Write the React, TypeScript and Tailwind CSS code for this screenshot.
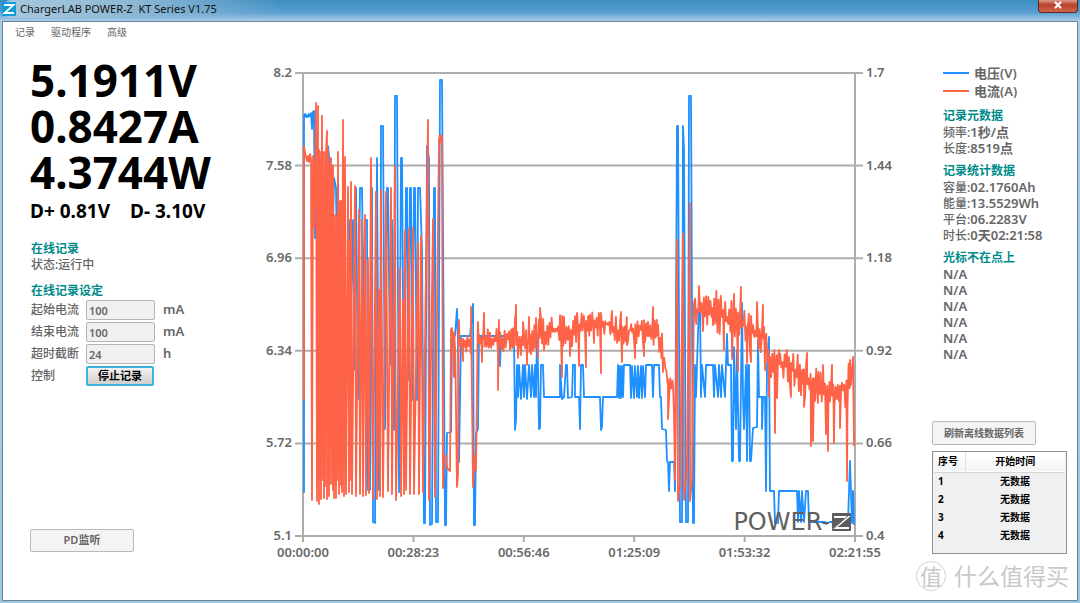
import { X } from 'lucide-react';

type Point = [number, number];
type Band = [x: number, top: number, bottom: number];

const MENU = ['记录', '驱动程序', '高级'];

const SETTINGS = [
  { id: 'start', label: '起始电流', value: '100', unit: 'mA' },
  { id: 'end', label: '结束电流', value: '100', unit: 'mA' },
  { id: 'timeout', label: '超时截断', value: '24', unit: 'h' },
];

const LEGEND = [
  { label: '电压(V)', color: 'bg-[#1e90ff]' },
  { label: '电流(A)', color: 'bg-[#ff6347]' },
];

const META = [
  { label: '频率:', value: '1秒/点' },
  { label: '长度:', value: '8519点' },
];

const STATS = [
  { label: '容量:', value: '02.1760Ah' },
  { label: '能量:', value: '13.5529Wh' },
  { label: '平台:', value: '06.2283V' },
  { label: '时长:', value: '0天02:21:58' },
];

// Plot area inside the chart's own coordinate space
const PLOT = { left: 303, right: 855, top: 73, bottom: 536 };
const VOLT_TICKS = ['8.2', '7.58', '6.96', '6.34', '5.72', '5.1'];
const AMP_TICKS = ['1.7', '1.44', '1.18', '0.92', '0.66', '0.4'];
const TIME_TICKS = ['00:00:00', '00:28:23', '00:56:46', '01:25:09', '01:53:32', '02:21:55'];

const VOLTAGE: Point[] = [
  [304, 493], [304, 115], [305, 114], [306, 117], [307, 115], [308, 117], [309, 114], [310, 116],
  [311, 113], [312, 129], [313, 112], [314, 111], [315, 238], [316, 238], [317, 140], [319, 300],
  [321, 175], [323, 330], [325, 200], [326, 350], [328, 146], [329, 155], [331, 320], [334, 178],
  [336, 188], [338, 330], [340, 250], [342, 280], [344, 220], [346, 420], [349, 220], [350, 340],
  [353, 220], [354, 370], [356, 188], [358, 399], [360, 188], [361, 188], [362, 188], [364, 340],
  [365, 220], [367, 220], [368, 490], [370, 490], [372, 188], [373, 522], [375, 523], [377, 158],
  [379, 490], [380, 490], [381, 126], [383, 126], [385, 429], [387, 188], [388, 188], [390, 365],
  [391, 220], [392, 220], [394, 430], [395, 96], [397, 96], [399, 492], [401, 158], [402, 158],
  [404, 430], [406, 188], [407, 188], [408, 380], [410, 188], [411, 188], [412, 400], [414, 188],
  [415, 188], [417, 400], [418, 188], [420, 188], [422, 250], [424, 523], [425, 523], [427, 146],
  [429, 158], [430, 525], [432, 524], [434, 188], [435, 188], [436, 522], [438, 522], [440, 80],
  [442, 80], [445, 525], [446, 525], [447, 433], [451, 432], [452, 336], [455, 336], [457, 309],
  [458, 340], [459, 462], [461, 336], [470, 336], [473, 304], [474, 525], [475, 525], [476, 433],
  [478, 429], [479, 336], [499, 336], [500, 366], [501, 336], [514, 336], [515, 430], [516, 420],
  [517, 365], [518, 397], [519, 365], [521, 399], [523, 365], [524, 397], [525, 365], [527, 399],
  [529, 365], [531, 397], [532, 365], [534, 397], [535, 365], [536, 397], [537, 336], [538, 366],
  [539, 429], [540, 428], [541, 365], [543, 365], [544, 397], [560, 397], [560, 365], [562, 399],
  [564, 397], [566, 365], [567, 365], [568, 398], [572, 397], [573, 365], [575, 365], [575, 397],
  [579, 397], [580, 429], [581, 365], [583, 365], [584, 397], [600, 397], [601, 430], [602, 427],
  [603, 397], [617, 397], [618, 365], [619, 398], [620, 366], [621, 398], [622, 366], [623, 397],
  [624, 365], [630, 365], [631, 398], [632, 366], [634, 398], [635, 366], [637, 397], [638, 366],
  [639, 398], [641, 366], [642, 398], [643, 366], [645, 397], [646, 365], [652, 365], [653, 397],
  [654, 365], [659, 365], [660, 397], [661, 397], [662, 429], [666, 430], [667, 461], [668, 462],
  [669, 491], [670, 462], [674, 462], [675, 491], [677, 126], [678, 126], [680, 522], [682, 522],
  [683, 126], [684, 150], [686, 522], [688, 522], [689, 96], [691, 96], [693, 523], [694, 523],
  [695, 365], [696, 397], [697, 365], [699, 303], [700, 303], [701, 397], [702, 365], [705, 397],
  [706, 365], [713, 365], [714, 397], [715, 365], [718, 397], [719, 365], [721, 397], [722, 365],
  [725, 397], [727, 334], [728, 365], [731, 365], [732, 461], [733, 461], [734, 347], [736, 429],
  [737, 350], [739, 461], [740, 461], [742, 303], [743, 397], [744, 429], [746, 365], [747, 461],
  [748, 365], [749, 365], [750, 461], [751, 461], [753, 428], [757, 427], [758, 340], [759, 397],
  [762, 397], [762, 429], [763, 397], [765, 397], [766, 491], [767, 365], [769, 337], [770, 491],
  [774, 491], [775, 523], [778, 523], [779, 491], [797, 491], [798, 522], [799, 491], [801, 522],
  [802, 491], [804, 522], [806, 491], [808, 491], [809, 522], [825, 522], [826, 524], [830, 522],
  [848, 523], [850, 461], [852, 523], [853, 491], [854, 525],
];

// Load stepping phase: each peak is followed by a drop close to zero load
const CURRENT_STEPS: Point[] = [
  [304, 400], [304, 147], [306, 157], [307, 161], [308, 156], [309, 162], [310, 154], [311, 159],
  [312, 500], [313, 156], [314, 228], [315, 160], [315, 200], [316, 103], [317, 501], [318, 106],
  [318, 480], [319, 150], [319, 504], [320, 152], [321, 499], [322, 116], [322, 480], [323, 152],
  [324, 498], [325, 152], [325, 486], [326, 153], [327, 131], [327, 499], [328, 150], [329, 496],
  [330, 165], [331, 158], [331, 484], [332, 165], [333, 490], [333, 166], [334, 498], [335, 215],
  [336, 498], [337, 215], [337, 480], [338, 152], [339, 494], [340, 201], [341, 485], [341, 201],
  [342, 492], [343, 120], [344, 496], [345, 157], [346, 494], [348, 187], [349, 492], [350, 240],
  [350, 480], [351, 182], [352, 494], [355, 186], [356, 496], [359, 210], [360, 494], [362, 220],
  [363, 496], [365, 215], [366, 495], [368, 260], [369, 493], [371, 158], [373, 499], [376, 192],
  [377, 499], [379, 290], [380, 496], [381, 190], [383, 497], [386, 192], [388, 491], [391, 188],
  [392, 494], [395, 166], [396, 500], [400, 268], [401, 496], [403, 300], [404, 494], [405, 231],
  [406, 490], [409, 228], [410, 494], [413, 228], [414, 494], [418, 243], [419, 494], [421, 236],
  [423, 492], [428, 120], [429, 500], [433, 219], [435, 497], [439, 140], [440, 135], [441, 142],
  [442, 136], [442, 142], [443, 488], [444, 455], [446, 456], [447, 468], [450, 471], [451, 330],
];

const CURRENT_BANDS: Band[] = [
  [452, 328, 356], [471, 332, 354], [479, 327, 350], [498, 328, 352], [513, 323, 352],
  [530, 320, 360], [545, 316, 348], [560, 315, 344], [575, 314, 352], [590, 312, 338],
  [606, 311, 334], [618, 313, 352], [632, 314, 346], [648, 313, 344], [657, 317, 346],
  [662, 332, 368], [668, 362, 398], [673, 373, 396], [694, 298, 328], [712, 291, 325],
  [726, 290, 345], [740, 292, 355], [752, 310, 352], [764, 314, 355], [770, 335, 385],
  [778, 349, 374], [790, 350, 386], [804, 352, 398], [814, 368, 402], [830, 367, 410],
  [842, 367, 410], [851, 358, 415],
];

const CURRENT_SPIKES: Point[] = [
  [454, 377], [457, 487], [458, 475], [459, 320], [463, 361], [471, 307], [473, 487], [475, 455],
  [476, 470], [478, 322], [482, 362], [484, 313], [498, 390], [499, 320], [515, 317], [516, 305],
  [518, 358], [521, 355], [523, 322], [527, 365], [529, 317], [536, 318], [538, 358], [540, 308],
  [544, 350], [562, 377], [564, 317], [570, 356], [577, 313], [579, 366], [586, 367], [594, 343],
  [601, 373], [612, 311], [617, 340], [621, 312], [622, 362], [627, 345], [635, 358], [644, 356],
  [653, 307], [663, 372], [668, 419], [674, 413], [675, 480], [677, 240], [678, 501], [680, 485],
  [683, 234], [684, 500], [687, 470], [690, 203], [690, 501], [692, 480], [694, 303], [699, 286],
  [703, 331], [724, 350], [732, 359], [734, 294], [738, 371], [741, 287], [747, 363], [751, 362],
  [757, 302], [763, 305], [765, 370], [769, 397], [775, 433], [777, 398], [779, 350], [791, 397],
  [804, 407], [807, 353], [811, 446], [813, 441], [818, 403], [823, 365], [826, 434], [828, 451],
  [832, 365], [834, 443], [840, 428], [847, 481], [850, 360], [853, 357], [854, 446],
];

// Quiet stretches are sampled inside a band, spikes are laid over them
function buildCurrent(): Point[] {
  let seed = 7;
  const random = () => {
    seed = (seed * 16807) % 2147483647;
    return seed / 2147483647;
  };
  const samples: Point[] = [];
  let up = true;
  for (let i = 0; i < CURRENT_BANDS.length - 1; i++) {
    const [x0, top0, bottom0] = CURRENT_BANDS[i];
    const [x1, top1, bottom1] = CURRENT_BANDS[i + 1];
    for (let x = x0; x < x1; x += 1.1) {
      const k = (x - x0) / (x1 - x0);
      const top = top0 + (top1 - top0) * k;
      const bottom = bottom0 + (bottom1 - bottom0) * k;
      const depth = random() * 0.5;
      samples.push([x, top + (bottom - top) * (up ? depth : 1 - depth)]);
      up = !up;
    }
  }
  // no band applies while the load is being switched
  const gaps = [[456, 458.5], [472, 477.5], [674, 693.5]];
  const quiet = samples.filter(([x]) => !gaps.some(([a, b]) => x > a && x < b));
  return [...CURRENT_STEPS, ...[...quiet, ...CURRENT_SPIKES].sort((a, b) => a[0] - b[0])];
}

const toPoints = (points: Point[]) => points.map(([x, y]) => `${x},${y.toFixed(1)}`).join(' ');
const CURRENT = buildCurrent();

function Chart() {
  const rowStep = (PLOT.bottom - PLOT.top) / 5;
  const colStep = (PLOT.right - PLOT.left) / 5;

  return (
    <svg
      viewBox="264 60 636 504"
      className="block w-full font-['Noto_Sans',sans-serif] text-[13px] font-semibold"
      role="img"
      aria-label="电压 / 电流"
    >
      <g stroke="#adadad" strokeWidth="2">
        {VOLT_TICKS.map((tick, i) => (
          <line
            key={tick}
            x1={PLOT.left - 8}
            x2={PLOT.right + 8}
            y1={PLOT.top + rowStep * i}
            y2={PLOT.top + rowStep * i}
          />
        ))}
        <line x1={PLOT.left} x2={PLOT.left} y1={PLOT.top} y2={PLOT.bottom} />
        <line x1={PLOT.right} x2={PLOT.right} y1={PLOT.top} y2={PLOT.bottom} />
        {TIME_TICKS.map((tick, i) => (
          <line
            key={tick}
            x1={PLOT.left + colStep * i}
            x2={PLOT.left + colStep * i}
            y1={PLOT.bottom}
            y2={PLOT.bottom + 6}
          />
        ))}
      </g>
      <g fill="none" strokeLinejoin="round" strokeWidth="1.8">
        <polyline points={toPoints(VOLTAGE)} stroke="#1e90ff" />
        <polyline points={toPoints(CURRENT)} stroke="#ff6347" />
      </g>
      <g fill="#696969">
        {VOLT_TICKS.map((tick, i) => (
          <text key={tick} x={292} y={PLOT.top + rowStep * i + 4} textAnchor="end">
            {tick}
          </text>
        ))}
        {AMP_TICKS.map((tick, i) => (
          <text key={tick} x={866} y={PLOT.top + rowStep * i + 4}>
            {tick}
          </text>
        ))}
        {TIME_TICKS.map((tick, i) => (
          <text key={tick} x={PLOT.left + colStep * i} y={557} textAnchor="middle">
            {tick}
          </text>
        ))}
      </g>
      <text
        x={830}
        y={530}
        textAnchor="end"
        fill="#606060"
        className="font-['DejaVu_Sans',sans-serif] text-[24px] font-normal"
      >
        POWER-
      </text>
      <rect x="832" y="513" width="19" height="18" rx="1" fill="#5c5c5c" />
      <path d="M834 517H848L835 528H849" fill="none" stroke="#fff" strokeWidth="2" />
      <path d="M832 530L850 514" stroke="#5c5c5c" strokeWidth="1" />
    </svg>
  );
}

function TitleBar() {
  return (
    <header className="flex h-[21px] items-start justify-between bg-linear-to-b from-[#3d8dc0] via-[#5a9fd0] via-60% to-[#a9cdec] pl-[2px]">
      <div className="flex h-[18px] items-center gap-1 rounded-full bg-linear-to-r from-[#a9c9dd] via-[#8ab6d3] to-transparent pr-16">
        <svg viewBox="0 0 14 14" className="size-[14px]" aria-hidden="true">
          <rect width="14" height="14" rx="1" fill="#0d9ddb" />
          <path d="M2 3H11.500L2.500 11H12" fill="none" stroke="#fff" strokeWidth="1.800" />
        </svg>
        <h1 className="font-['Noto_Sans',sans-serif] text-[11px] leading-4 font-normal whitespace-pre text-[#111]">
          ChargerLAB POWER-Z  KT Series V1.75
        </h1>
      </div>
      <button
        type="button"
        aria-label="关闭"
        className="mr-[2px] flex h-[13px] w-10 items-start justify-center rounded-b border border-t-0 border-[#5a2a2a] bg-linear-to-b from-[#dc9a8c] via-[#b8402c] via-40% to-[#d0674a] text-white"
      >
        <X size={10} strokeWidth={5} />
      </button>
    </header>
  );
}

function Readings() {
  return (
    <section className="flex w-[261px] shrink-0 flex-col pt-[15px] pb-12 pl-[27px]">
      <div className="text-[44px] leading-[46px] font-bold text-black">
        <p>5.1911V</p>
        <p>0.8427A</p>
        <p>4.3744W</p>
      </div>
      <p className="flex gap-5 text-[19px] leading-8 font-bold text-black">
        <span>D+ 0.81V</span>
        <span>D- 3.10V</span>
      </p>

      <div className="mt-3.5 pl-px">
        <h2 className="text-xs leading-4 font-bold text-[#008b8b]">在线记录</h2>
        <p className="text-xs leading-4 font-medium">状态:运行中</p>

        <h2 className="mt-2.5 text-xs leading-4 font-bold text-[#008b8b]">在线记录设定</h2>
        {SETTINGS.map((s) => (
          <div key={s.id} className="flex h-[22px] items-center">
            <label htmlFor={s.id} className="w-[55px] text-xs font-medium">
              {s.label}
            </label>
            <input
              id={s.id}
              defaultValue={s.value}
              className="h-5 w-[69px] rounded-xs border border-[#b4b4b4] bg-[#f0f0f0] px-0.5 text-[11px]"
            />
            <span className="ml-2 text-[13px]">{s.unit}</span>
          </div>
        ))}
        <div className="flex h-[22px] items-center">
          <span className="w-[55px] text-xs font-medium">控制</span>
          <button
            type="button"
            className="h-5 w-[68px] rounded-xs border-2 border-[#3fb0dc] bg-linear-to-b from-[#f2f2f2] to-[#cfcfcf] text-[11px] leading-4 text-black"
          >
            停止记录
          </button>
        </div>
      </div>

      <button
        type="button"
        className="mt-auto h-[23px] w-[104px] rounded-xs border border-[#b9b9b9] bg-[#f4f4f4] text-[11px]"
      >
        PD监听
      </button>
    </section>
  );
}

function StatLine({ label, value }: { label: string; value: string }) {
  return (
    <p className="flex h-4 items-baseline">
      <span className="text-xs leading-4 font-medium">{label}</span>
      {value}
    </p>
  );
}

function SidePanel() {
  return (
    <aside className="flex w-[177px] shrink-0 flex-col pt-[22px] pl-8">
      <div className="pl-[11px] text-[13px] leading-4">
        <ul>
          {LEGEND.map((item) => (
            <li key={item.label} className="flex h-[18px] items-center gap-[5px]">
              <span className={`h-0.5 w-[26px] ${item.color}`} />
              {item.label}
            </li>
          ))}
        </ul>

        <h2 className="mt-2 text-xs leading-4 font-bold text-[#008b8b]">记录元数据</h2>
        {META.map((m) => (
          <StatLine key={m.label} {...m} />
        ))}

        <h2 className="mt-[7px] text-xs leading-4 font-bold text-[#008b8b]">记录统计数据</h2>
        {STATS.map((s) => (
          <StatLine key={s.label} {...s} />
        ))}

        <h2 className="mt-[7px] text-xs leading-4 font-bold text-[#008b8b]">光标不在点上</h2>
        {Array.from({ length: 6 }, (_, i) => (
          <p key={i}>N/A</p>
        ))}
      </div>

      <button
        type="button"
        className="mt-[59px] h-6 w-[104px] rounded-xs border border-[#b9b9b9] bg-[#f4f4f4] text-[10px]"
      >
        刷新离线数据列表
      </button>
      <div className="mt-1.5 h-[103px] w-[135px] border border-[#8e9199] bg-[#f0f0f0] px-px">
        <table className="w-full text-[10px] font-bold text-black">
          <thead>
            <tr className="h-5 border-b border-[#d5d5d5] bg-linear-to-b from-white to-[#f3f4f6]">
              <th className="w-[31px] border-r border-[#e2e3e6] pl-1 text-left">序号</th>
              <th>开始时间</th>
            </tr>
          </thead>
          <tbody>
            {[1, 2, 3, 4].map((n) => (
              <tr key={n} className="h-[18px]">
                <td className="pl-1">{n}</td>
                <td className="text-center">无数据</td>
              </tr>
            ))}
          </tbody>
        </table>
      </div>
    </aside>
  );
}

export default function App() {
  return (
    <div className="flex min-h-screen flex-col bg-linear-to-b from-[#a5cfe6] to-[#9cc8e8] pb-[2px] font-['Noto_Sans','Noto_Sans_CJK_SC',sans-serif] font-semibold text-[#666]">
      <TitleBar />
      <div className="relative mr-[2px] ml-[2px] flex flex-1 flex-col border border-[#6f8594] bg-white">
        <nav className="flex h-5 items-center gap-4 pl-3 text-[10px] font-normal">
          {MENU.map((item) => (
            <button key={item} type="button">
              {item}
            </button>
          ))}
        </nav>
        <main className="flex flex-1">
          <Readings />
          <section className="min-w-0 flex-1 pt-[18px]">
            <Chart />
          </section>
          <SidePanel />
        </main>
        <div className="absolute right-2 bottom-2 flex items-center gap-2 font-normal text-[#c8c8c8]">
          <span className="flex size-[30px] items-center justify-center rounded-full border border-[#d4d4d4] text-[22px] leading-none">
            值
          </span>
          <span className="text-[23px] leading-8">什么值得买</span>
        </div>
      </div>
    </div>
  );
}
